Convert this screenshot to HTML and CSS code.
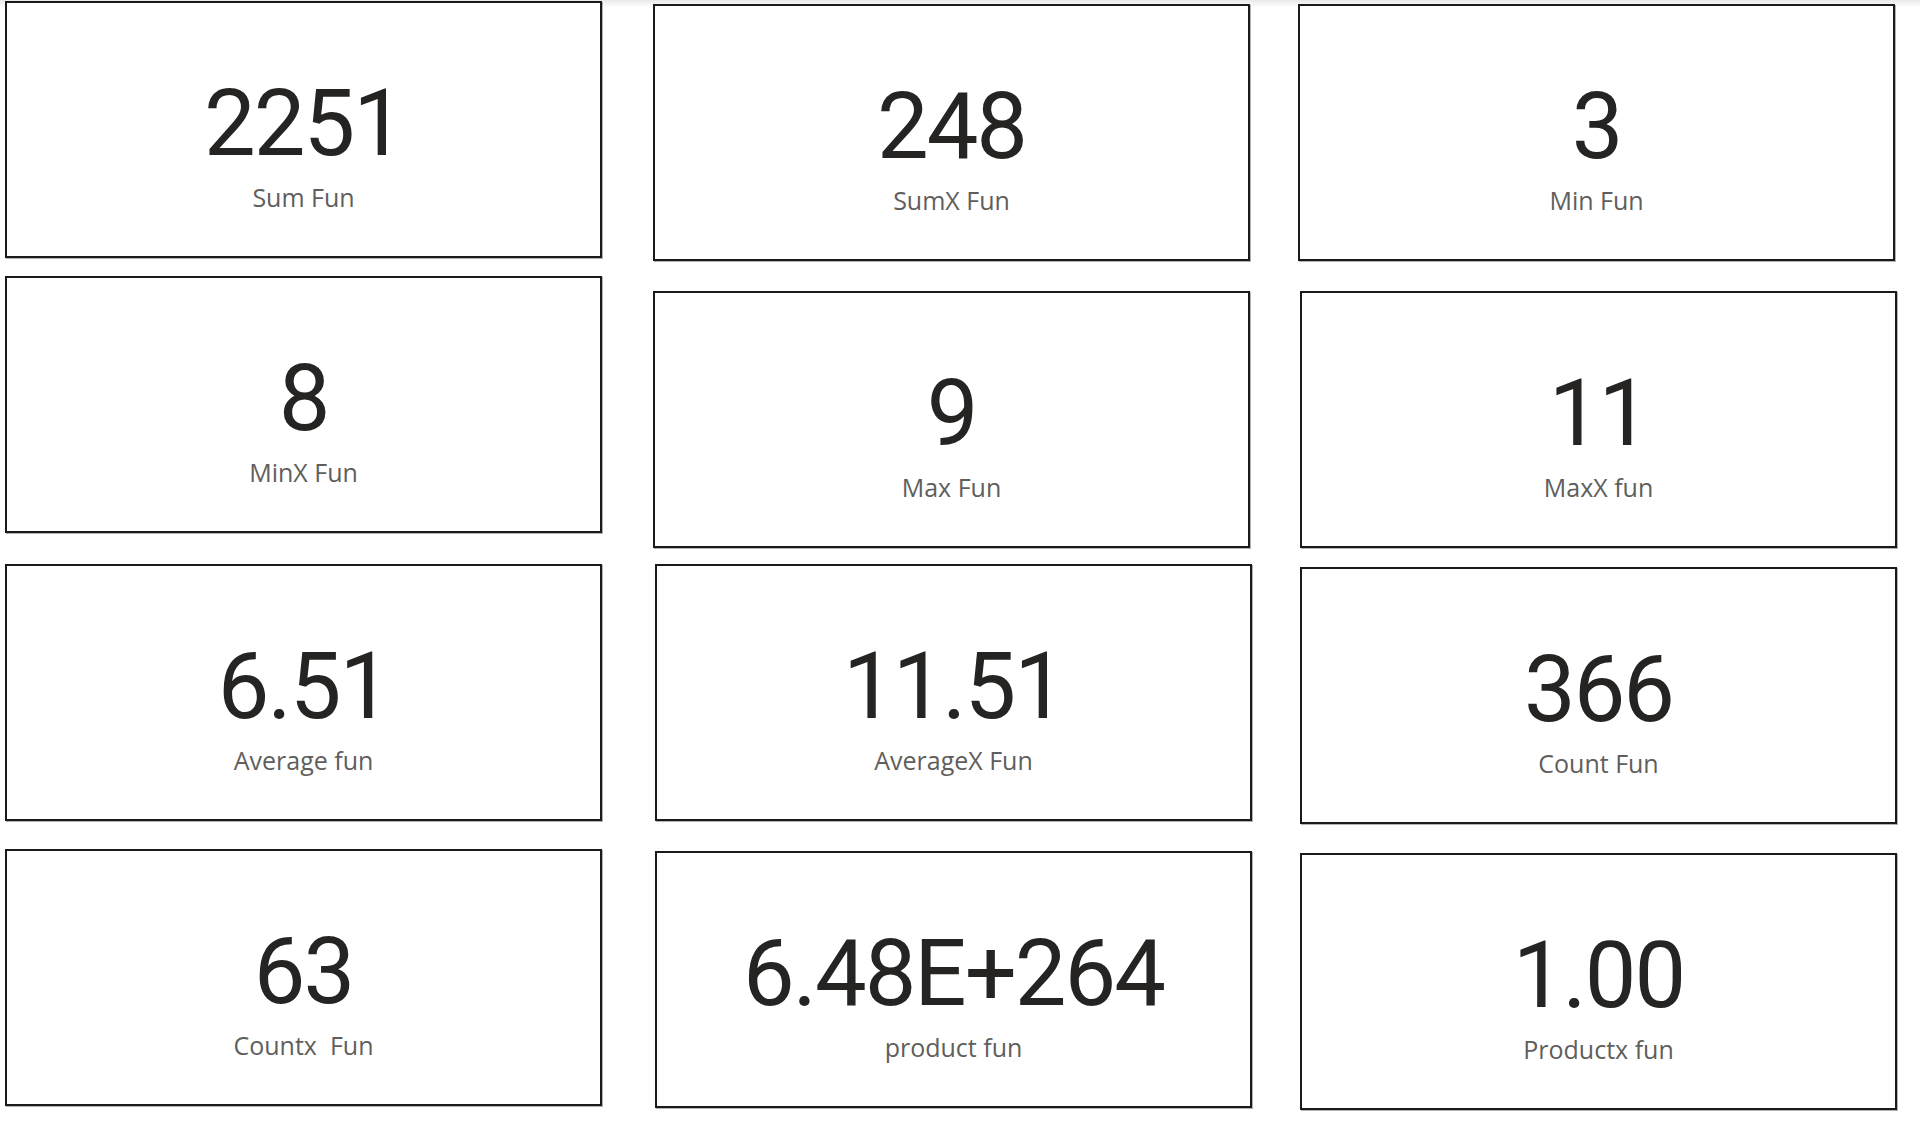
FILE: index.html
```html
<!DOCTYPE html>
<html lang="en">
<head>
<meta charset="utf-8">
<title>Aggregate functions</title>
<link rel="stylesheet" href="styles.css">
</head>
<body>
<main class="canvas">
  <section class="col col-1">
    <div class="card c-a"><div class="value">2251</div><div class="label">Sum Fun</div></div>
    <div class="card c-d"><div class="value">8</div><div class="label">MinX Fun</div></div>
    <div class="card c-g"><div class="value">6.51</div><div class="label">Average fun</div></div>
    <div class="card c-j"><div class="value">63</div><div class="label">Countx  Fun</div></div>
  </section>
  <section class="col col-2">
    <div class="card c-b"><div class="value">248</div><div class="label">SumX Fun</div></div>
    <div class="card c-e"><div class="value">9</div><div class="label">Max Fun</div></div>
    <div class="card c-h shift"><div class="value">11.51</div><div class="label">AverageX Fun</div></div>
    <div class="card c-k shift"><div class="value">6.48E+264</div><div class="label">product fun</div></div>
  </section>
  <section class="col col-3">
    <div class="card c-c"><div class="value">3</div><div class="label">Min Fun</div></div>
    <div class="card c-f shift"><div class="value">11</div><div class="label">MaxX fun</div></div>
    <div class="card c-i shift"><div class="value">366</div><div class="label">Count Fun</div></div>
    <div class="card c-l shift"><div class="value">1.00</div><div class="label">Productx fun</div></div>
  </section>
</main>
</body>
</html>
```

FILE: styles.css
```css
html, body {
  margin: 0;
  padding: 0;
}

body {
  width: 1920px;
  height: 1126px;
  overflow: hidden;
  background: linear-gradient(#e8e8e8, #ffffff 7px) no-repeat #ffffff;
  font-family: "Open Sans", "Noto Sans", sans-serif;
}

.canvas {
  display: flex;
  align-items: flex-start;
  padding-left: 5px;
}

.col {
  display: flex;
  flex-direction: column;
  width: 599px;
}

.col-2 { margin-left: 49px; }
.col-3 { margin-left: 46px; }

.card {
  box-sizing: border-box;
  width: 597px;
  height: 257px;
  border: 2px solid #1a1a1a;
  box-shadow: 1px 1px 0 rgba(0, 0, 0, 0.3);
  background: #ffffff;
  display: flex;
  flex-direction: column;
  align-items: center;
  padding-top: 75px;
}

.shift { margin-left: 2px; }

.c-a { margin-top: 1px; }
.c-d { margin-top: 18px; }
.c-g { margin-top: 31px; }
.c-j { margin-top: 28px; }

.c-b { margin-top: 4px; }
.c-e { margin-top: 30px; }
.c-h { margin-top: 16px; }
.c-k { margin-top: 30px; }

.c-c { margin-top: 4px; }
.c-f { margin-top: 30px; }
.c-i { margin-top: 19px; }
.c-l { margin-top: 29px; }

.value {
  font-family: Roboto, "DejaVu Sans Condensed", sans-serif;
  font-size: 92px;
  line-height: 92px;
  font-weight: 400;
  color: #252423;
  letter-spacing: -2px;
  white-space: nowrap;
}

.label {
  margin-top: 11px;
  font-family: "Open Sans", "Noto Sans", sans-serif;
  font-size: 25px;
  line-height: 32px;
  color: #605e5c;
  white-space: pre;
}
```
